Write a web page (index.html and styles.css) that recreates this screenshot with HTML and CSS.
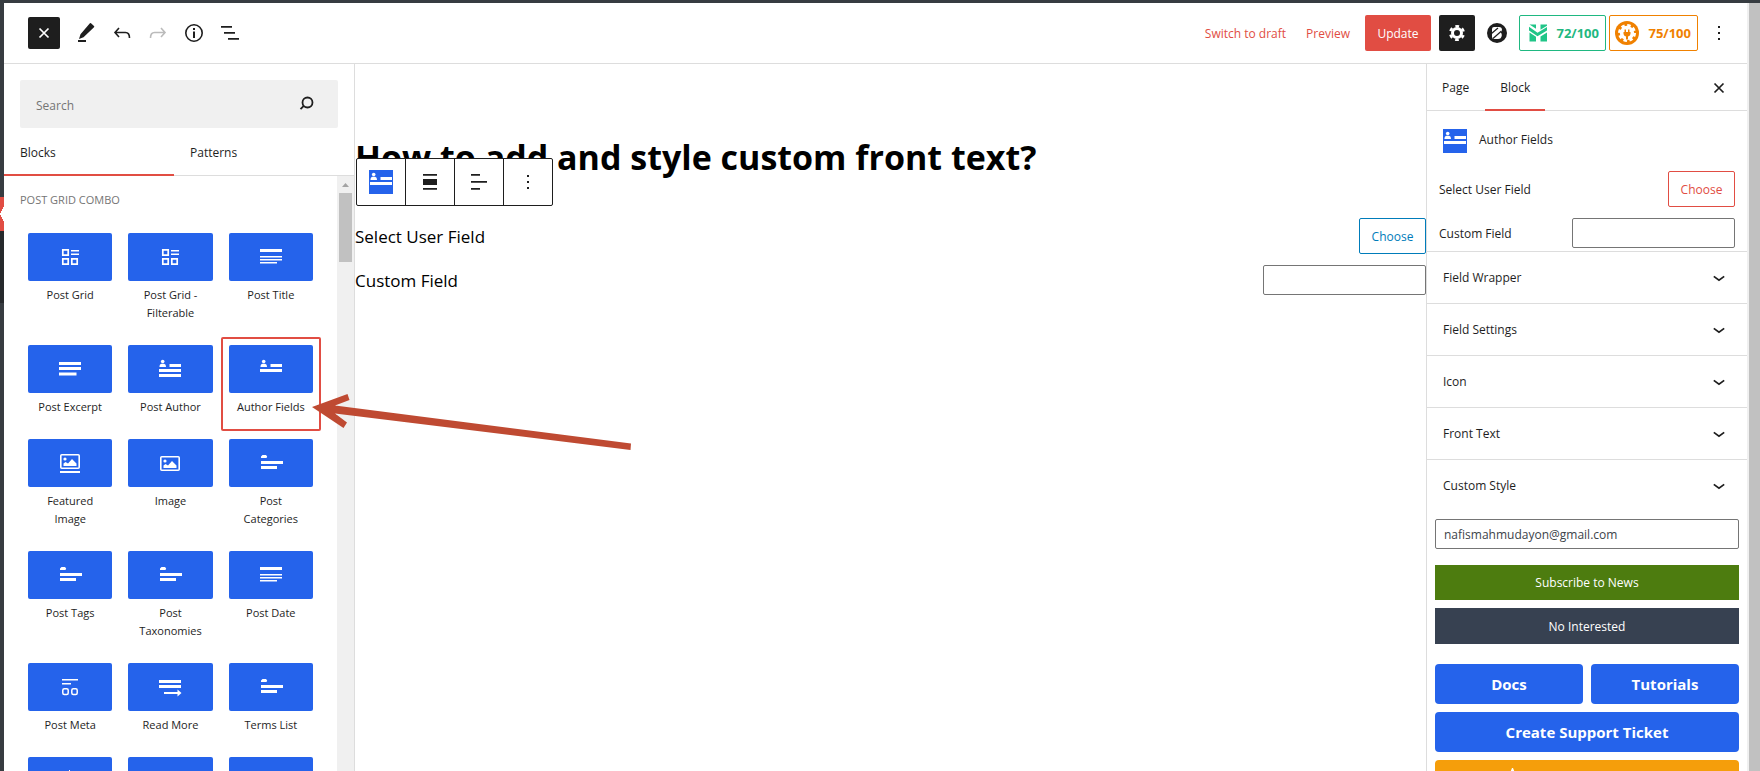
FILE: index.html
```html
<!DOCTYPE html>
<html lang="en">
<head>
<meta charset="utf-8">
<title>How to add and style custom front text?</title>
<link rel="stylesheet" href="styles.css">
</head>
<body>
<svg class="sprite" aria-hidden="true">
  <symbol id="i-grid" viewBox="0 0 24 24"><path fill="none" stroke="currentColor" stroke-width="1.7" d="M4.8 4.8h5.4v5.4H4.8zM4.8 13.8h5.4v5.4H4.8zM13.8 13.8h5.4v5.4h-5.4z"/><path fill="currentColor" d="M13 5h8v1.5h-8zM13 8.5h8V10h-8z"/></symbol>
  <symbol id="i-title" viewBox="0 0 24 24"><path fill="currentColor" d="M1 4h22v3H1zM1 11h22v1.5H1zM1 14h22v1.5H1zM1 17h17v1.5H1z"/></symbol>
  <symbol id="i-excerpt" viewBox="0 0 24 24"><path fill="currentColor" d="M1 5h22v3H1zM1 10h22v3H1zM1 15.5h17.500v3H1z"/></symbol>
  <symbol id="i-author" viewBox="0 0 24 24"><circle cx="4.700" cy="4.500" r="1.800" fill="currentColor"/><path fill="currentColor" d="M1.500 10c0-3 1.500-3.200 3.200-3.200S8 7 8 10zM11.500 7H23v3H11.500zM1 12h22v3H1zM1 17h22v3H1z"/></symbol>
  <symbol id="i-fields" viewBox="0 0 24 24"><circle cx="4.700" cy="4.500" r="1.800" fill="currentColor"/><path fill="currentColor" d="M1.500 10c0-3 1.500-3.200 3.200-3.200S8 7 8 10zM11.500 7H23v3H11.500zM1 12h22v3H1z"/></symbol>
  <symbol id="i-featured" viewBox="0 0 24 24"><rect x="2.800" y="3.800" width="18.400" height="13.400" rx="1" fill="none" stroke="currentColor" stroke-width="1.600"/><circle cx="7" cy="8" r="1.600" fill="currentColor"/><path fill="currentColor" d="M5.500 15v-2.500l2-1.500 2.500 1.500 4-4.500 4.500 4.500V15zM2 20h20v2H2z"/></symbol>
  <symbol id="i-image" viewBox="0 0 24 24"><rect x="2.800" y="5.800" width="18.400" height="13.400" rx="1" fill="none" stroke="currentColor" stroke-width="1.600"/><circle cx="7" cy="10" r="1.600" fill="currentColor"/><path fill="currentColor" d="M5.500 17v-2.500l2-1.500 2.500 1.500 4-4.500 4.500 4.500V17z"/></symbol>
  <symbol id="i-tags" viewBox="0 0 24 24"><path fill="currentColor" d="M3.500 4H7l1.200 1.500L7.500 7H2V5.500zM2 10h22v3H2zM2 15h16v3H2z"/></symbol>
  <symbol id="i-meta" viewBox="0 0 24 24"><path fill="currentColor" d="M4 4h16v1.500H4zM4 8h9v1.500H4z"/><g fill="none" stroke="currentColor" stroke-width="1.500"><rect x="4.800" y="13.800" width="5.400" height="5.600" rx="1.500"/><rect x="13.800" y="13.800" width="5.400" height="5.600" rx="1.500"/></g></symbol>
  <symbol id="i-more" viewBox="0 0 24 24"><path fill="currentColor" d="M1 5h22v3H1zM1 10h22v3H1zM6 17h13.500v-2.500l4 3.500-4 3.500V19H6z"/></symbol>
  <symbol id="i-x" viewBox="0 0 24 24"><path fill="none" stroke="currentColor" stroke-width="1.700" d="M7.500 7.500l9 9M16.500 7.500l-9 9"/></symbol>
  <symbol id="i-down" viewBox="0 0 24 24"><path fill="none" stroke="currentColor" stroke-width="1.700" d="M6.800 10.400l5.200 3.900 5.200-3.900"/></symbol>
  <symbol id="i-dots" viewBox="0 0 24 24"><path fill="currentColor" d="M11 5h2v2h-2zM11 11h2v2h-2zM11 17h2v2h-2z"/></symbol>
  <symbol id="i-undo" viewBox="0 0 24 24"><path fill="none" stroke="currentColor" stroke-width="1.600" d="M9 7l-4 4.500L9 16M5 11.500h10.500q4 0 4 5.500"/></symbol>
</svg>
<div class="window">
  <div class="rail"><span class="rail-current"></span><span class="rail-sub"></span></div>
  <div class="editor">
    <header class="topbar">
      <div class="tools">
        <button class="close-btn" aria-label="Close inserter"><svg class="icon"><use href="#i-x"/></svg></button>
        <div class="tool-row">
          <button class="tool" aria-label="Edit"><svg class="icon" viewBox="0 0 24 24"><path fill="currentColor" d="M17 2.200l3 2.800q.6.600 0 1.200L9.500 16.300 5 18l1.500-4.700L15.900 2.300q.6-.6 1.100-.1zM4 19h8v2H4z"/></svg></button>
          <button class="tool" aria-label="Undo"><svg class="icon"><use href="#i-undo"/></svg></button>
          <button class="tool tool-off" aria-label="Redo"><svg class="icon flip"><use href="#i-undo"/></svg></button>
          <button class="tool" aria-label="Details"><svg class="icon" viewBox="0 0 24 24"><circle cx="12" cy="12" r="8.200" fill="none" stroke="currentColor" stroke-width="1.600"/><path fill="currentColor" d="M11 7h2v2h-2zM11 10.500h2V17h-2z"/></svg></button>
          <button class="tool" aria-label="List view"><svg class="icon" viewBox="0 0 24 24"><path fill="currentColor" d="M3 5h11v1.700H3zM6 11h11v1.700H6zM10 17h11v1.700H10z"/></svg></button>
        </div>
      </div>
      <div class="actions">
        <button class="link-btn">Switch to draft</button>
        <button class="link-btn preview">Preview</button>
        <button class="update">Update</button>
        <button class="gear" aria-label="Settings"><svg class="icon" viewBox="0 0 24 24"><g fill="none" stroke="currentColor"><circle cx="12" cy="12" r="4.500" stroke-width="3"/><circle cx="12" cy="12" r="6.800" stroke-width="2.400" stroke-dasharray="3.600 3.520" stroke-dashoffset="1.800" transform="rotate(30 12 12)"/></g></svg></button>
        <button class="round" aria-label="Page builder"><svg class="icon" viewBox="0 0 24 24"><circle cx="12" cy="12" r="10" fill="currentColor"/><path fill="#fff" d="M9 6h5q3 .2 3 3-.1 1.700-1.300 2.600Q17 12.500 16.800 14.500 16.300 18 13 18H9q-2 0-2-2V8q0-2 2-2z"/><path fill="none" stroke="currentColor" stroke-width="1.200" d="M6.500 12.500L13 7M8 17.500L16.500 10"/></svg></button>
        <div class="scores">
          <button class="score green"><svg class="badge-icon" viewBox="0 0 20 20"><path fill="currentColor" d="M1.500 1.500H8v4.300zM1 3.700l8.500 6L19 4v3.500l-9.500 5.800L1 7.500zM12.500 1.500H19v1.200l-6.500 4zM1.500 9.500L8 13.800v4.700H1.500zM19 9.500v9h-6.500v-5z"/></svg>72/100</button>
          <button class="score orange"><svg class="badge-icon big" viewBox="0 0 24 24"><circle cx="12" cy="12" r="12" fill="currentColor"/><circle cx="12" cy="12" r="7.200" fill="#fff"/><circle cx="12" cy="12" r="7.300" fill="none" stroke="#fff" stroke-width="3.400" stroke-dasharray="3.300 2.430"/><path fill="currentColor" d="M9.500 8.500H11V11h2V8.500h1.500V11h1v2q-.5 2-2.500 2.500v3h-2v-3q-2-.5-2.500-2.500v-2h1z"/></svg>75/100</button>
        </div>
        <button class="more" aria-label="Options"><svg class="icon"><use href="#i-dots"/></svg></button>
      </div>
    </header>
    <div class="body">
      <aside class="inserter">
        <div class="search"><input type="search" placeholder="Search" aria-label="Search"><svg class="icon" viewBox="0 0 24 24"><circle cx="13.500" cy="10.500" r="5" fill="none" stroke="currentColor" stroke-width="1.800"/><path stroke="currentColor" stroke-width="1.800" d="M9.800 13.800L6.500 17.200"/></svg></div>
        <div class="tabs"><button class="tab active">Blocks</button><button class="tab">Patterns</button></div>
        <div class="scroller">
          <div class="library">
            <h2>Post Grid Combo</h2>
            <div class="tiles">
              <button class="tile"><span class="thumb"><svg class="icon"><use href="#i-grid"/></svg></span><span class="name">Post Grid</span></button>
              <button class="tile"><span class="thumb"><svg class="icon"><use href="#i-grid"/></svg></span><span class="name">Post Grid - Filterable</span></button>
              <button class="tile"><span class="thumb"><svg class="icon"><use href="#i-title"/></svg></span><span class="name">Post Title</span></button>
              <button class="tile"><span class="thumb"><svg class="icon"><use href="#i-excerpt"/></svg></span><span class="name">Post Excerpt</span></button>
              <button class="tile"><span class="thumb"><svg class="icon"><use href="#i-author"/></svg></span><span class="name">Post Author</span></button>
              <button class="tile picked"><span class="thumb"><svg class="icon"><use href="#i-fields"/></svg></span><span class="name">Author Fields</span></button>
              <button class="tile"><span class="thumb"><svg class="icon"><use href="#i-featured"/></svg></span><span class="name">Featured Image</span></button>
              <button class="tile"><span class="thumb"><svg class="icon"><use href="#i-image"/></svg></span><span class="name">Image</span></button>
              <button class="tile"><span class="thumb"><svg class="icon"><use href="#i-tags"/></svg></span><span class="name">Post Categories</span></button>
              <button class="tile"><span class="thumb"><svg class="icon"><use href="#i-tags"/></svg></span><span class="name">Post Tags</span></button>
              <button class="tile"><span class="thumb"><svg class="icon"><use href="#i-tags"/></svg></span><span class="name">Post Taxonomies</span></button>
              <button class="tile"><span class="thumb"><svg class="icon"><use href="#i-title"/></svg></span><span class="name">Post Date</span></button>
              <button class="tile"><span class="thumb"><svg class="icon"><use href="#i-meta"/></svg></span><span class="name">Post Meta</span></button>
              <button class="tile"><span class="thumb"><svg class="icon"><use href="#i-more"/></svg></span><span class="name">Read More</span></button>
              <button class="tile"><span class="thumb"><svg class="icon"><use href="#i-tags"/></svg></span><span class="name">Terms List</span></button>
              <button class="tile" aria-label="Block"><span class="thumb"><svg class="icon" viewBox="0 0 24 24"><path fill="currentColor" d="M11 1h1v3h-1z"/></svg></span></button>
              <button class="tile" aria-label="Block"><span class="thumb"></span></button>
              <button class="tile" aria-label="Block"><span class="thumb"></span></button>
            </div>
          </div>
          <div class="scrollbar"><svg viewBox="0 0 17 17"><path fill="#a3a3a3" d="M5 11l3.500-4L12 11z"/></svg><span class="thumb-bar"></span></div>
        </div>
      </aside>
      <main class="canvas">
        <h1>How to add and style custom front text?</h1>
        <div class="block-toolbar">
          <button aria-label="Author Fields"><svg class="icon field-icon"><use href="#i-fields"/></svg></button>
          <button aria-label="Align"><svg class="icon" viewBox="0 0 24 24"><path fill="currentColor" d="M5 4h14v1.700H5zM5 9h14v6H5zM5 18h14v1.700H5z"/></svg></button>
          <button aria-label="Align text"><svg class="icon" viewBox="0 0 24 24"><path fill="currentColor" d="M4 4h9v1.700H4zM4 11h16v1.700H4zM4 18h9v1.700H4z"/></svg></button>
          <button aria-label="Options"><svg class="icon"><use href="#i-dots"/></svg></button>
        </div>
        <div class="field"><span>Select User Field</span><button class="choose blue">Choose</button></div>
        <div class="field"><label for="canvas-field">Custom Field</label><input class="text-input" id="canvas-field" type="text"></div>
      </main>
      <aside class="settings">
        <div class="settings-tabs"><button>Page</button><button class="active">Block</button><button class="close-panel" aria-label="Close settings"><svg class="icon"><use href="#i-x"/></svg></button></div>
        <div class="block-card"><svg class="icon field-icon"><use href="#i-fields"/></svg><h2>Author Fields</h2></div>
        <div class="side-fields">
          <div class="field"><span>Select User Field</span><button class="choose">Choose</button></div>
          <div class="field"><label for="side-field">Custom Field</label><input class="text-input" id="side-field" type="text"></div>
        </div>
        <button class="panel">Field Wrapper<svg class="icon"><use href="#i-down"/></svg></button>
        <button class="panel">Field Settings<svg class="icon"><use href="#i-down"/></svg></button>
        <button class="panel">Icon<svg class="icon"><use href="#i-down"/></svg></button>
        <button class="panel">Front Text<svg class="icon"><use href="#i-down"/></svg></button>
        <button class="panel">Custom Style<svg class="icon"><use href="#i-down"/></svg></button>
        <div class="promo">
          <input class="text-input" type="email" value="nafismahmudayon@gmail.com" aria-label="Email">
          <button class="flat subscribe">Subscribe to News</button>
          <button class="flat decline">No Interested</button>
          <div class="links">
            <a href="#docs">Docs</a><a href="#tutorials">Tutorials</a>
            <a class="wide" href="#support">Create Support Ticket</a>
            <a class="wide review" href="#reviews" aria-label="Reviews"><svg viewBox="0 0 24 24" class="icon"><path fill="currentColor" d="M11 0l1 0 2 5h-5z"/></svg></a>
          </div>
        </div>
      </aside>
    </div>
  </div>
  <div class="page-scroll"></div>
  <svg class="arrow" viewBox="0 0 330 60" aria-hidden="true"><path fill="#bf4a32" d="M2 17L37.500 4l2 6L25 15.500 321 53.500l-.5 6.500L25 23.500 37 32.500 33.500 38z"/></svg>
</div>
</body>
</html>
```
FILE: styles.css
```css
* { box-sizing: border-box; }
body {
  margin: 0;
  font-family: "Open Sans", "Noto Sans", sans-serif;
  font-size: 12px;
  line-height: 18px;
  color: #1e1e1e;
}
button, input { font: inherit; color: inherit; }
button { padding: 0; border: 0; background: none; }
h1, h2 { margin: 0; font-weight: 400; }
.sprite { display: none; }
.icon { display: block; width: 24px; height: 24px; flex: none; }
.flip { transform: scaleX(-1); }

.window {
  position: relative;
  display: flex;
  height: 100vh;
  overflow: hidden;
  border-top: 3px solid #373c41;
  background: #fff;
}
.rail { flex: none; width: 4px; padding-top: 194px; background: #373c41; }
.rail span { display: block; }
.rail-current {
  height: 34px;
  background: linear-gradient(to bottom right, #e14d43 50%, #fff 52%) 0 9px / 4px 8px no-repeat,
    linear-gradient(to top right, #e14d43 50%, #fff 52%) 0 17px / 4px 8px no-repeat, #e14d43;
}
.rail-sub { height: 72px; background: #26292c; }
.page-scroll { flex: none; width: 13px; border-left: 2px solid #f0f0f0; background: #c1c1c1; }

.editor { flex: 1; min-width: 0; display: flex; flex-direction: column; }
.topbar {
  flex: none;
  display: flex;
  justify-content: space-between;
  height: 61px;
  padding: 0 16px 0 24px;
  border-bottom: 1px solid #ddd;
}
.tools, .tool-row, .actions, .scores { display: flex; align-items: center; }
.tools { gap: 8px; }
.close-btn { padding: 4px; border-radius: 2px; background: #1e1e1e; color: #fff; }
.tool { padding: 6px; }
.tool-off { color: #bbb; }
.actions { gap: 8px; }
.link-btn { padding-top: 1px; color: #e14d43; }
.preview { margin: 0 7px 0 12px; }
.update { height: 36px; padding: 1px 12px 0; min-width: 66px; border-radius: 2px; background: #e14d43; color: #fff; }
.gear { padding: 6px; border-radius: 2px; background: #1e1e1e; color: #fff; }
.scores { gap: 3px; }
.score {
  display: flex;
  align-items: center;
  justify-content: space-between;
  height: 36px;
  width: 87px;
  padding: 0 6px 0 8px;
  border: 1px solid;
  border-radius: 2px;
  font-size: 13px;
  font-weight: 700;
}
.badge-icon { width: 20px; height: 20px; }
.green { color: #1fb881; }
.green .badge-icon { color: #20c588; }
.orange { width: 89px; padding-left: 5px; color: #f08100; }
.big { width: 24px; height: 24px; }
.round { padding: 0 2px; }
.more { padding-left: 1px; }

.body { flex: 1; min-height: 0; display: flex; }
.inserter {
  flex: none;
  display: flex;
  flex-direction: column;
  width: 351px;
  border-right: 1px solid #ddd;
}
.search {
  display: flex;
  align-items: center;
  height: 48px;
  margin: 16px 16px 0;
  padding: 0 20px 0 16px;
  border-radius: 2px;
  background: #f0f0f0;
}
.search input { flex: 1; min-width: 0; padding: 3px 0 0; border: 0; background: none; outline: 0; }
.search input::placeholder { color: #757575; }
.tabs { display: grid; grid-template-columns: 170px 1fr; height: 48px; border-bottom: 1px solid #ddd; }
.tab { height: 48px; padding: 2px 16px 0; text-align: left; font-weight: 500; }
.tab.active { border-bottom: 2px solid #e14d43; padding-top: 4px; }
.scroller { flex: 1; min-height: 0; display: flex; overflow: hidden; }
.library { flex: 1; padding: 15px 16px 0; }
.library h2 { color: #757575; font-size: 11px; text-transform: uppercase; }
.tiles { display: grid; grid-template-columns: repeat(3, 1fr); padding-top: 16px; }
.tile {
  display: flex;
  flex-direction: column;
  align-items: center;
  justify-content: flex-start;
  gap: 5px;
  padding: 8px 8px 15px;
  font-size: 11px;
  line-height: 18px;
}
.thumb {
  display: flex;
  align-items: center;
  justify-content: center;
  width: 100%;
  height: 48px;
  border-radius: 2px;
  background: #2563eb;
  color: #fff;
}
.name { padding: 0 4px; }
.picked { border-radius: 2px; box-shadow: inset 0 0 0 2px #e14d43; }
.scrollbar { flex: none; width: 17px; background: #f0f0f0; }
.scrollbar svg { display: block; height: 17px; }
.thumb-bar { display: block; height: 69px; margin: 0 2px; background: #c1c1c1; }

.canvas { position: relative; flex: 1; min-width: 0; padding-top: 66px; color: #000; }
.canvas h1 { font-size: 34px; font-weight: 700; line-height: 54px; }
.block-toolbar {
  position: absolute;
  top: 94px;
  left: 1px;
  display: flex;
  border: 1px solid #1e1e1e;
  border-radius: 2px;
  background: #fff;
  color: #1e1e1e;
}
.block-toolbar button { padding: 11px 12px; }
.block-toolbar button + button { border-left: 1px solid #1e1e1e; }
.field-icon { background: #2563eb; color: #fff; }
.field { display: flex; align-items: center; justify-content: space-between; }
.field + .field { margin-top: 11px; }
.field span, .field label { padding-top: 2px; }
.canvas .field { font-size: 17px; }
.canvas h1 + .block-toolbar + .field { margin-top: 34px; }
.choose {
  height: 36px;
  min-width: 67px;
  padding: 1px 11px 0;
  border: 1px solid #e14d43;
  border-radius: 2px;
  color: #e14d43;
  font-size: 12px;
}
.choose.blue { border-color: #007cba; color: #007cba; }
.text-input {
  width: 163px;
  height: 30px;
  padding: 0 8px;
  border: 1px solid #757575;
  border-radius: 2px;
  background: #fff;
  color: #3c434a;
}

.settings { flex: none; width: 321px; border-left: 1px solid #ddd; }
.settings-tabs { display: flex; height: 47px; padding-right: 16px; border-bottom: 1px solid #ddd; }
.settings-tabs button { height: 47px; padding: 0 16px 0 15px; font-weight: 500; }
.settings-tabs .active { border-bottom: 2px solid #e14d43; padding: 2px 15px 0; }
.settings-tabs .close-panel { margin-left: auto; padding: 0; }
.block-card { display: flex; gap: 12px; padding: 18px 16px; }
.block-card h2 { font-size: 12px; line-height: 22px; font-weight: 500; }
.side-fields { padding: 0 12px 3px; }
.panel {
  display: flex;
  align-items: center;
  justify-content: space-between;
  width: 100%;
  height: 52px;
  padding: 0 16px;
  border-top: 1px solid #ddd;
  font-weight: 500;
}
.promo { display: flex; flex-direction: column; gap: 8px; padding: 8px; }
.promo .text-input { width: 100%; margin-bottom: 8px; }
.flat { height: 35px; padding-top: 1px; color: #fff; }
.subscribe { background: #4d7c0f; }
.decline { height: 36px; background: #374151; }
.links { display: grid; grid-template-columns: 1fr 1fr; gap: 8px; padding-top: 12px; }
.links a {
  display: flex;
  align-items: center;
  justify-content: center;
  height: 40px;
  border-radius: 4px;
  background: #2563eb;
  color: #fff;
  font-size: 15px;
  font-weight: 700;
  text-decoration: none;
}
.links .wide { grid-column: 1 / -1; }
.links .review { justify-content: flex-start; padding-left: 66px; background: #f59e0b; }

.arrow { position: absolute; left: 310px; top: 387px; width: 330px; height: 60px; }
```
